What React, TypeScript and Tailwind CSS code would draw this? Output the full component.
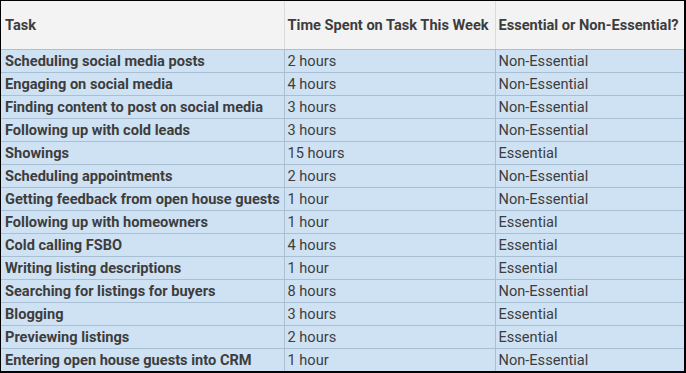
const rows: [string, string, string][] = [
  ["Scheduling social media posts", "2 hours", "Non-Essential"],
  ["Engaging on social media", "4 hours", "Non-Essential"],
  ["Finding content to post on social media", "3 hours", "Non-Essential"],
  ["Following up with cold leads", "3 hours", "Non-Essential"],
  ["Showings", "15 hours", "Essential"],
  ["Scheduling appointments", "2 hours", "Non-Essential"],
  ["Getting feedback from open house guests", "1 hour", "Non-Essential"],
  ["Following up with homeowners", "1 hour", "Essential"],
  ["Cold calling FSBO", "4 hours", "Essential"],
  ["Writing listing descriptions", "1 hour", "Essential"],
  ["Searching for listings for buyers", "8 hours", "Non-Essential"],
  ["Blogging", "3 hours", "Essential"],
  ["Previewing listings", "2 hours", "Essential"],
  ["Entering open house guests into CRM", "1 hour", "Non-Essential"],
];

export default function App() {
  return (
    <div className="w-[686px] h-[373px] bg-white">
      <div className="w-[686px] h-[373px] border-l border-t border-r-2 border-b-2 border-black bg-[#cfe2f3] overflow-hidden font-['Roboto',sans-serif] text-[14.6px] text-[#3d3d3d]">
        <table className="border-collapse table-fixed w-[683px]">
          <colgroup>
            <col className="w-[283px]" />
            <col className="w-[211px]" />
            <col className="w-[189px]" />
          </colgroup>
          <thead>
            <tr className="h-[48px] bg-[#f3f3f3]">
              <th className="text-left font-bold px-[4px] pt-[2px] border-r border-[#dadada] border-b border-b-[#a8bfd4]">Task</th>
              <th className="text-left font-bold px-[3px] pt-[2px] border-r border-[#dadada] border-b border-b-[#a8bfd4] whitespace-nowrap">Time Spent on Task This Week</th>
              <th className="text-left font-bold px-[3px] pt-[2px] border-b border-b-[#a8bfd4] whitespace-nowrap">Essential or Non-Essential?</th>
            </tr>
          </thead>
          <tbody>
            {rows.map(([task, time, kind]) => (
              <tr key={task} className="h-[23px]">
                <td className="font-bold px-[4px] py-0 leading-[22px] border-r border-b border-[#a8bfd4] whitespace-nowrap">{task}</td>
                <td className="px-[3px] py-0 leading-[22px] border-r border-b border-[#a8bfd4]">{time}</td>
                <td className="px-[3px] py-0 leading-[22px] border-b border-[#a8bfd4]">{kind}</td>
              </tr>
            ))}
          </tbody>
        </table>
      </div>
    </div>
  );
}
